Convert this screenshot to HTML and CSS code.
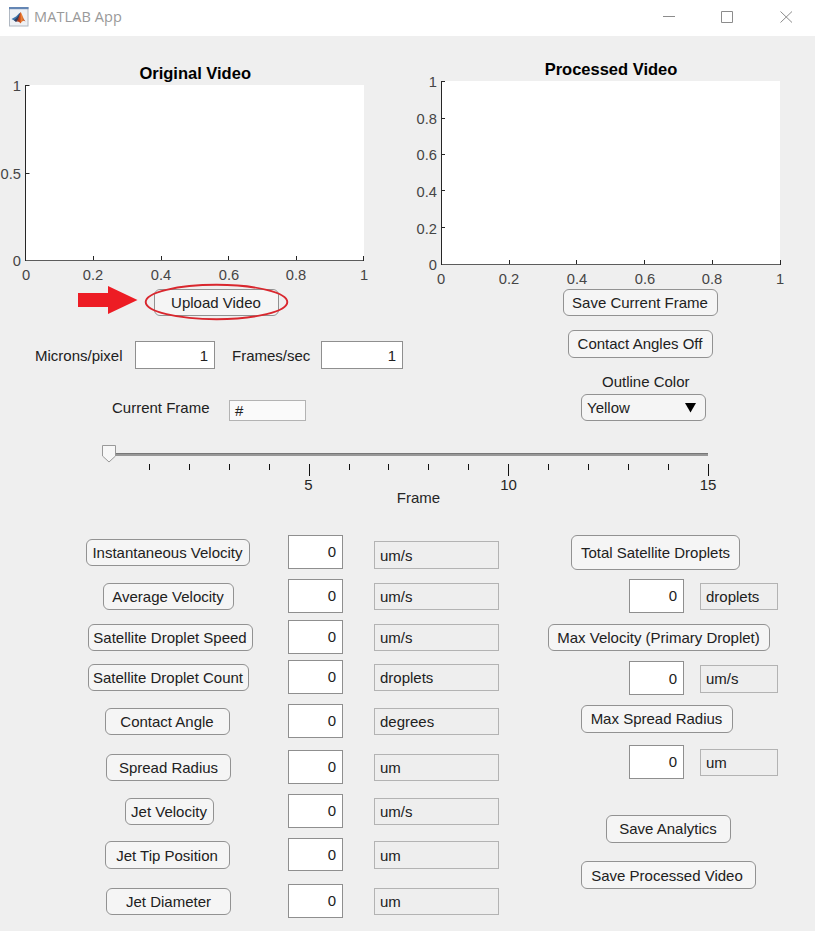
FILE: index.html
```html
<!DOCTYPE html>
<html lang="en">
<head>
<meta charset="utf-8">
<title>MATLAB App</title>
<link rel="stylesheet" href="styles.css">
</head>
<body>
<header class="titlebar">
  <svg class="logo" width="20" height="20" viewBox="0 0 20 20">
    <defs><linearGradient id="peak"><stop offset="0" stop-color="#7b2a1e"/><stop offset=".4" stop-color="#c9481c"/><stop offset=".6" stop-color="#ee8a3a"/><stop offset="1" stop-color="#a8321c"/></linearGradient></defs>
    <rect x=".5" y=".5" width="18.500" height="18.500" fill="#eef1f5" stroke="#b0b8c2"/>
    <rect x="0" y="0" width="19.500" height="2.200" fill="#6486b4"/>
    <path d="M2.500 12 7 9.500l3-3 1.500-1L9.500 12 7 14.500z" fill="#3e77b0"/>
    <path d="M5 13.200 8 10.500l3.500-5L9.500 12.500 7 15z" fill="#34405f"/>
    <path d="M7 14.800c2-1 2.500-4.300 4.500-9.800 1.500 1 2.500 6.500 5 9.500-2-1.300-3-1-5 2-1-1.500-2-2.500-4.500-1.700z" fill="url(#peak)"/>
  </svg>
  <span class="app-name">MATLAB App</span>
  <svg class="controls" width="130" height="14" viewBox="0 0 130 14" fill="none" stroke="#8c8c8c">
    <path d="M0 6.500H12M58.500 1.500h11v11h-11zM117.500 1.500l11.500 11M129 1.500l-11.500 11"/>
  </svg>
</header>
<main>
  <div class="upper">
    <section class="col-left">
      <svg class="plot" width="407" height="248" viewBox="0 36 407 248">
        <rect x="26" y="85" width="338" height="176" fill="#fff"/>
        <path class="base" d="M25 260.500H364"/>
        <path class="axis" d="M25.500 85V261M25 85.500h4.500M25 173.500h4.500M93.500 260v-4M161.500 260v-4M228.500 260v-4M296.500 260v-4M363.500 261v-5"/>
        <text class="plot-title" x="195.200" y="79">Original Video</text>
        <g class="ylab"><text x="21" y="91">1</text><text x="21" y="179">0.5</text><text x="21" y="266">0</text></g>
        <g class="xlab"><text x="26" y="280">0</text><text x="93" y="280">0.2</text><text x="161" y="280">0.4</text><text x="229" y="280">0.6</text><text x="296" y="280">0.8</text><text x="364" y="280">1</text></g>
      </svg>
      <div class="upload">
        <button class="btn upload-btn">Upload Video</button>
        <svg class="callout" width="214" height="40" viewBox="76 282 214 40">
          <path d="M78 293h30v-7l29.500 14-29.500 14v-7H78z" fill="#ed1c24"/>
          <ellipse cx="216.500" cy="302" rx="70.800" ry="17.200" fill="none" stroke="#d9272e" stroke-width="1.900"/>
        </svg>
      </div>
      <div class="scale-row">
        <span class="microns">Microns/pixel</span><div class="num scale-box">1</div>
        <span class="fps">Frames/sec</span><div class="num fps-box">1</div>
      </div>
      <div class="frame-row"><span class="current">Current Frame</span><div class="hash">#</div></div>
    </section>
    <section class="col-right">
      <svg class="plot" width="408" height="253" viewBox="407 36 408 253">
        <rect x="441" y="81" width="339" height="184" fill="#fff"/>
        <path class="base" d="M441 264.500H780"/>
        <path class="axis" d="M441.500 81V265M441 81.500h4M441 118.500h4M441 154.500h4M441 190.500h4M441 227.500h4M509.500 264v-4M576.500 264v-4M644.500 264v-4M712.500 264v-4M780.500 265v-5"/>
        <text class="plot-title" x="611" y="75">Processed Video</text>
        <g class="ylab"><text x="437" y="87">1</text><text x="437" y="124">0.8</text><text x="437" y="160">0.6</text><text x="437" y="197">0.4</text><text x="437" y="234">0.2</text><text x="437" y="270">0</text></g>
        <g class="xlab"><text x="441" y="284">0</text><text x="509" y="284">0.2</text><text x="577" y="284">0.4</text><text x="645" y="284">0.6</text><text x="712" y="284">0.8</text><text x="780" y="284">1</text></g>
      </svg>
      <button class="btn save-frame">Save Current Frame</button>
      <button class="btn angles-off">Contact Angles Off</button>
      <span class="outline-label">Outline Color</span>
      <button class="btn dropdown"><span>Yellow</span><svg width="11" height="10" viewBox="0 0 11 10"><path d="M0 0h11L5.500 9.500z"/></svg></button>
    </section>
  </div>
  <svg class="slider" width="815" height="94" viewBox="0 421 815 94">
    <path d="M109 453h599v1H109z" fill="#777"/><path d="M109 454h599v2H109z" fill="#979797"/>
    <path d="M102.500 445.500h13v10.500l-6.500 6-6.500-6z" fill="#f7f7f7" stroke="#999"/>
    <path class="tick" d="M149.500 464v6M189.500 464v6M229.500 464v6M269.500 464v6M309.500 464v12M349.500 464v6M388.500 464v6M428.500 464v6M468.500 464v6M508.500 464v12M548.500 464v6M588.500 464v6M628.500 464v6M668.500 464v6M708.500 464v12"/>
    <g class="slider-lab"><text x="308.500" y="490">5</text><text x="508.500" y="490">10</text><text x="708" y="490">15</text><text x="418.500" y="503">Frame</text></g>
  </svg>
  <div class="lower">
    <section class="metrics">
      <div class="row r1"><div class="cell"><button class="btn">Instantaneous Velocity</button></div><div class="num">0</div><div class="unit">um/s</div></div>
      <div class="row r2"><div class="cell"><button class="btn">Average Velocity</button></div><div class="num">0</div><div class="unit">um/s</div></div>
      <div class="row r3"><div class="cell"><button class="btn">Satellite Droplet Speed</button></div><div class="num">0</div><div class="unit">um/s</div></div>
      <div class="row r4"><div class="cell"><button class="btn">Satellite Droplet Count</button></div><div class="num">0</div><div class="unit">droplets</div></div>
      <div class="row r5"><div class="cell"><button class="btn">Contact Angle</button></div><div class="num">0</div><div class="unit">degrees</div></div>
      <div class="row r6"><div class="cell"><button class="btn">Spread Radius</button></div><div class="num">0</div><div class="unit">um</div></div>
      <div class="row r7"><div class="cell"><button class="btn">Jet Velocity</button></div><div class="num">0</div><div class="unit">um/s</div></div>
      <div class="row r8"><div class="cell"><button class="btn">Jet Tip Position</button></div><div class="num">0</div><div class="unit">um</div></div>
      <div class="row r9"><div class="cell"><button class="btn">Jet Diameter</button></div><div class="num">0</div><div class="unit">um</div></div>
    </section>
    <section class="totals">
      <button class="btn total-droplets">Total Satellite Droplets</button>
      <div class="pair p1"><div class="num">0</div><div class="unit">droplets</div></div>
      <button class="btn max-velocity">Max Velocity (Primary Droplet)</button>
      <div class="pair p2"><div class="num">0</div><div class="unit">um/s</div></div>
      <button class="btn max-radius">Max Spread Radius</button>
      <div class="pair p3"><div class="num">0</div><div class="unit">um</div></div>
      <button class="btn save-analytics">Save Analytics</button>
      <button class="btn save-video">Save Processed Video</button>
    </section>
  </div>
</main>
</body>
</html>
```
FILE: styles.css
```css
* { box-sizing: border-box; }
body { margin: 0; width: 815px; height: 931px; overflow: hidden; background: #efefef; color: #212121; font: 15px/18px "Liberation Sans", Arial, sans-serif; }
svg { display: block; flex: none; }
.titlebar { display: flex; align-items: center; height: 36px; padding: 0 22px 2px 9px; background: #fff; }
.app-name { margin-left: 5px; flex: 1; color: #999; font: 14.500px/20px "Open Sans", "Noto Sans", sans-serif; letter-spacing: 0.100px; }
.upper { display: flex; height: 385px; }
.col-left { width: 407px; }
.col-right { width: 408px; display: flex; flex-direction: column; align-items: flex-start; }
.base { stroke: #5c5c5c; fill: none; }
.axis { stroke: #262626; fill: none; }
.plot-title { font-size: 16.500px; font-weight: bold; text-anchor: middle; fill: #000; }
.ylab, .xlab { font-size: 14.700px; fill: #454545; }
.ylab { text-anchor: end; }
.xlab, .slider-lab { text-anchor: middle; }
.slider-lab { fill: #262626; }
.tick { stroke: #111; }

.btn { display: flex; align-items: center; justify-content: center; flex: none; height: 27px; padding: 0 1px 0 0; border: 1px solid #929292; border-radius: 6px; background: #f5f5f5; color: #212121; font: inherit; white-space: nowrap; }
.num { flex: none; width: 55px; height: 34px; padding-right: 6px; border: 1px solid #8f8f8f; background: #fff; text-align: right; line-height: 32px; }
.unit { flex: none; width: 125px; height: 27px; margin-top: 4px; padding-left: 5px; border: 1px solid #b3b3b3; background: #eee; line-height: 26px; }

.upload { position: relative; height: 57px; padding: 5px 0 0 154px; }
.upload-btn { width: 125px; }
.callout { position: absolute; left: 76px; top: -2px; }
.scale-row { display: flex; align-items: center; height: 28px; padding-left: 35px; }
.scale-row .num { height: 28px; line-height: 28px; }
.microns, .fps { padding-top: 2px; }
.microns { width: 100px; }
.scale-row .scale-box { width: 80px; }
.fps { width: 89px; margin-left: 17px; }
.scale-row .fps-box { width: 82px; }
.frame-row { display: flex; margin-top: 31px; padding-left: 112px; }
.current { width: 117px; line-height: 16px; }
.hash { width: 77px; height: 21px; padding-left: 5px; border: 1px solid #b3b3b3; background: #fafafa; line-height: 20px; }

.save-frame { width: 155px; margin-left: 156px; }
.angles-off { width: 145px; height: 28px; margin: 14px 0 0 161px; }
.outline-label { margin: 15px 0 0 195px; height: 21px; }
.dropdown { justify-content: space-between; width: 125px; margin-left: 174px; padding: 0 9px 0 5px; }

.lower { display: flex; padding-top: 20px; }
.metrics { width: 548px; }
.row { display: flex; height: 34px; }
.cell { width: 288px; padding-top: 4px; }
.row .unit { margin-left: 31px; }
.r1 { margin-bottom: 10px; }
.r1 .btn { width: 164px; margin-left: 86px; }
.r1 .unit { height: 28px; margin-top: 6px; line-height: 28px; }
.r2 { margin-bottom: 7px; }
.r2 .btn { width: 131px; margin-left: 103px; }
.r3 { margin-bottom: 6px; }
.r3 .btn { width: 165px; margin-left: 88px; }
.r4 { margin-bottom: 10px; }
.r4 .btn { width: 161px; margin-left: 88px; }
.r5 { margin-bottom: 12px; }
.r5 .btn { width: 125px; margin-left: 105px; }
.r6 { margin-bottom: 10px; }
.r6 .btn { width: 125px; margin-left: 106px; padding: 0; }
.r7 { margin-bottom: 10px; }
.r7 .btn { width: 89px; margin-left: 125px; }
.r8 { margin-bottom: 12px; }
.r8 .cell { padding-top: 3px; }
.r8 .btn { width: 125px; height: 28px; margin-left: 105px; padding-top: 2px; }
.r8 .num { height: 33px; }
.r8 .unit { height: 28px; margin-top: 3px; line-height: 28px; }
.r9 .btn { width: 125px; margin-left: 106px; padding: 0; }

.total-droplets { width: 169px; height: 35px; margin-left: 23px; padding: 0; }
.pair { display: flex; gap: 16px; height: 34px; padding-left: 81px; }
.pair .unit { width: 78px; }
.p1 { margin: 9px 0 11px; }
.p2 { margin: 10px 0; }
.p2 .num { line-height: 34px; }
.p2 .unit { height: 28px; }
.p3 { margin: 12px 0 36px; }
.max-velocity { width: 222px; }
.max-radius { width: 152px; height: 28px; margin-left: 33px; }
.save-analytics { width: 125px; height: 28px; margin-left: 58px; }
.save-video { width: 175px; height: 28px; margin: 18px 0 0 33px; padding: 2px 3px 0 0; }
```
